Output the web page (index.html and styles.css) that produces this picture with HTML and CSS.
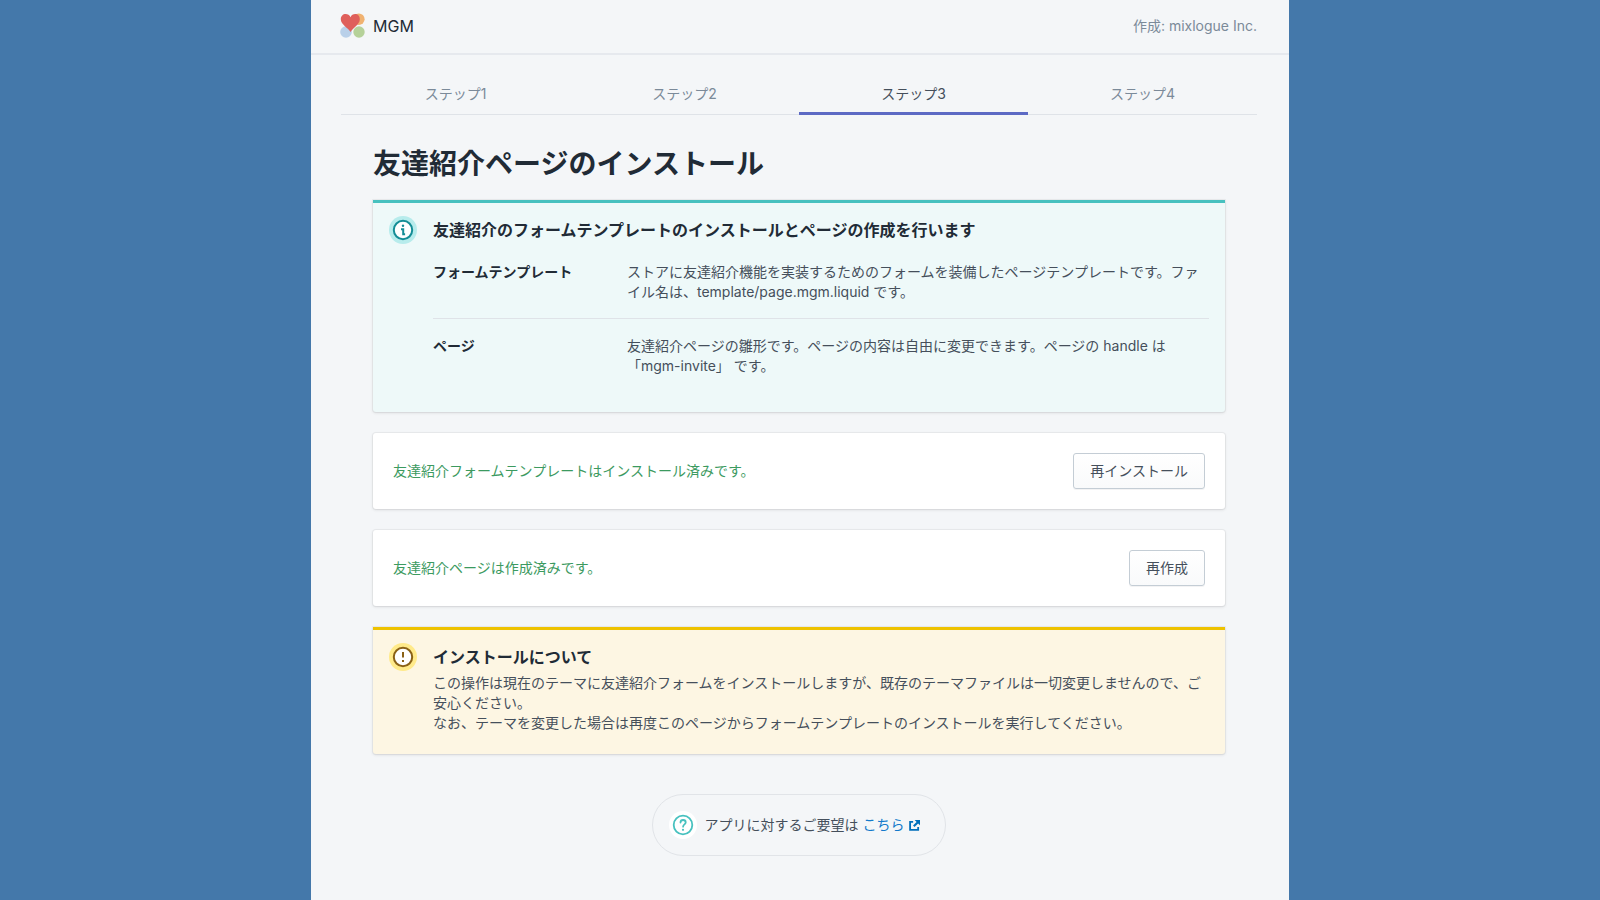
FILE: index.html
```html
<!DOCTYPE html>
<html lang="ja">
<head>
<meta charset="utf-8">
<title>MGM</title>
<link rel="stylesheet" href="styles.css">
</head>
<body>
<div class="frame">
  <header class="topbar">
    <div class="brand">
      <svg class="logo" viewBox="0 0 25 25" aria-hidden="true">
        <circle cx="18.800" cy="6.200" r="5.800" fill="#f0b271"/>
        <circle cx="6" cy="19" r="5.800" fill="#b9d0e9"/>
        <circle cx="19" cy="19" r="5.700" fill="#b5d199"/>
        <path d="M10.500 19C8.500 15 .8 11.500.8 6.200.8 3 3 1 5.600 1c2.200 0 4 1.200 4.900 3.200C11.400 2.200 13 1 15.300 1c2.700 0 4.500 2.200 4.500 5.200C19.800 11.500 13 14.500 10.500 19z" fill="#df5f5b"/>
      </svg>
      <span>MGM</span>
    </div>
    <span class="author">作成: mixlogue Inc.</span>
  </header>

  <nav class="tabs">
    <a class="tab" href="#step1">ステップ1</a>
    <a class="tab" href="#step2">ステップ2</a>
    <a class="tab tab-active" href="#step3" aria-current="step">ステップ3</a>
    <a class="tab" href="#step4">ステップ4</a>
  </nav>

  <main class="content">
    <h1 class="title">友達紹介ページのインストール</h1>

    <section class="banner banner-info">
      <svg class="badge" viewBox="0 0 28 28" aria-hidden="true">
        <circle cx="14" cy="14" r="14" fill="#b7ecec"/>
        <circle cx="14" cy="14" r="9.200" fill="#fff" stroke="#148d96" stroke-width="2"/>
        <circle cx="14" cy="9.800" r="1.200" fill="#148d96"/>
        <path d="M12 13.200h2.200v5h1.900" fill="none" stroke="#148d96" stroke-width="2"/>
      </svg>
      <div class="banner-body">
        <h2 class="banner-title">友達紹介のフォームテンプレートのインストールとページの作成を行います</h2>
        <dl class="terms">
          <div class="term">
            <dt>フォームテンプレート</dt>
            <dd>ストアに友達紹介機能を実装するためのフォームを装備したページテンプレートです。ファイル名は、template/page.mgm.liquid です。</dd>
          </div>
          <div class="term">
            <dt>ページ</dt>
            <dd>友達紹介ページの雛形です。ページの内容は自由に変更できます。ページの handle は「mgm-invite」 です。</dd>
          </div>
        </dl>
      </div>
    </section>

    <section class="card">
      <p class="status">友達紹介フォームテンプレートはインストール済みです。</p>
      <button class="button" type="button">再インストール</button>
    </section>

    <section class="card">
      <p class="status">友達紹介ページは作成済みです。</p>
      <button class="button" type="button">再作成</button>
    </section>

    <section class="banner banner-warning">
      <svg class="badge" viewBox="0 0 28 28" aria-hidden="true">
        <circle cx="14" cy="14" r="14" fill="#ffea8a"/>
        <circle cx="14" cy="14" r="9.200" fill="#fff" stroke="#8a6116" stroke-width="2"/>
        <path d="M14 9v5.500" stroke="#8a6116" stroke-width="2"/>
        <path d="M14 17v2" stroke="#8a6116" stroke-width="2"/>
      </svg>
      <div class="banner-body">
        <h2 class="banner-title">インストールについて</h2>
        <p>この操作は現在のテーマに友達紹介フォームをインストールしますが、既存のテーマファイルは一切変更しませんので、ご安心ください。</p>
        <p>なお、テーマを変更した場合は再度このページからフォームテンプレートのインストールを実行してください。</p>
      </div>
    </section>

    <footer class="help">
      <svg class="badge" viewBox="0 0 28 28" aria-hidden="true">
        <circle cx="14" cy="14" r="14" fill="#fff"/>
        <circle cx="14" cy="14" r="9.300" fill="none" stroke="#47c1bf" stroke-width="1.800"/>
        <path d="M11.500 11.500c0-1.500 1.100-2.500 2.600-2.500s2.600 1 2.600 2.400c0 1.900-2.600 2-2.600 4.300" fill="none" stroke="#47c1bf" stroke-width="1.800" stroke-linecap="round"/>
        <circle cx="14" cy="18.800" r="1.100" fill="#47c1bf"/>
      </svg>
      <p>アプリに対するご要望は
        <a class="link" href="#contact">こちら<svg class="external" viewBox="0 0 12 12" aria-hidden="true">
            <path d="M4.500 2H1.200v8.800H10V7.600" fill="none" stroke="#006fbb" stroke-width="2"/>
            <path d="M6.200 0H12v5.800L9.900 3.700 6 7.600 4.400 6 8.300 2.100z" fill="#006fbb"/>
          </svg></a></p>
    </footer>
  </main>
</div>
</body>
</html>
```

FILE: styles.css
```css
* {
  box-sizing: border-box;
}

body {
  margin: 0;
  background: #4478aa;
  color: #454f5b;
  font: 14px/20px Inter, "Noto Sans CJK JP", sans-serif;
}

h1, h2, p, dl, dd {
  margin: 0;
}

.frame {
  max-width: 978px;
  min-height: 100vh;
  margin: 0 auto;
  background: #f4f6f8;
}

.topbar {
  display: flex;
  align-items: center;
  justify-content: space-between;
  padding: 13px 32px 15px 29px;
  border-bottom: 2px solid #e6e9ee;
}

.brand {
  display: flex;
  align-items: center;
  gap: 8px;
  color: #212b36;
  font-size: 16px;
}

.logo {
  width: 25px;
  height: 25px;
}

.author {
  color: #7b8a99;
}

.tabs {
  display: flex;
  margin: 0 32px 0 30px;
  box-shadow: inset 0 -1px #dfe3e8;
}

.tab {
  flex: 1;
  padding: 29px 8px 8px;
  border-bottom: 3px solid transparent;
  color: #7b8a99;
  text-align: center;
  text-decoration: none;
}

.tab-active {
  border-bottom-color: #5c6ac4;
  color: #454f5b;
}

.content {
  display: flex;
  flex-direction: column;
  gap: 21px;
  padding: 34px 64px 40px 62px;
}

.title {
  color: #212b36;
  font-size: 28px;
  font-weight: 600;
  line-height: 30px;
}

.banner,
.card {
  display: flex;
  border-radius: 3px;
  box-shadow: 0 0 0 1px rgba(63, 63, 68, 0.05), 0 1px 3px rgba(63, 63, 68, 0.15);
}

.banner {
  gap: 16px;
  padding: 15px 16px 21px;
  border-top: 3px solid;
  border-radius: 0 0 3px 3px;
}

.banner-info {
  border-top-color: #47c1bf;
  background: #eef9f9;
}

.banner-warning {
  border-top-color: #eec200;
  background: #fdf6e3;
}

.badge {
  flex: none;
  width: 28px;
  height: 28px;
}

.banner .badge {
  margin-top: -2px;
}

.banner-body {
  flex: 1;
}

.banner-title {
  margin-bottom: 4px;
  color: #212b36;
  font-size: 16px;
  font-weight: 600;
  line-height: 24px;
}

.term {
  display: grid;
  grid-template-columns: 1fr 3fr;
  padding: 16px 0;
}

.term + .term {
  padding: 17px 0 15px;
  border-top: 1px solid #dfe3e8;
}

.term dt {
  color: #212b36;
  font-weight: 600;
}

.card {
  align-items: center;
  justify-content: space-between;
  padding: 20px;
  background: #fff;
}

.status {
  color: #3c9a5f;
}

.button {
  padding: 7px 16px;
  border: 1px solid #c4cdd5;
  border-radius: 3px;
  background: linear-gradient(#fff, #f9fafb);
  box-shadow: 0 1px 0 rgba(22, 29, 37, 0.05);
  color: #454f5b;
  font: inherit;
}

.help {
  display: flex;
  align-items: center;
  align-self: center;
  gap: 8px;
  margin-top: 19px;
  padding: 16px 25px 16px 16px;
  border: 1px solid #e1e4e8;
  border-radius: 31px;
  color: #454f5b;
}

.link {
  color: #137acb;
  text-decoration: none;
}

.external {
  width: 11px;
  height: 11px;
  margin-left: 5px;
  vertical-align: -1px;
}
```
